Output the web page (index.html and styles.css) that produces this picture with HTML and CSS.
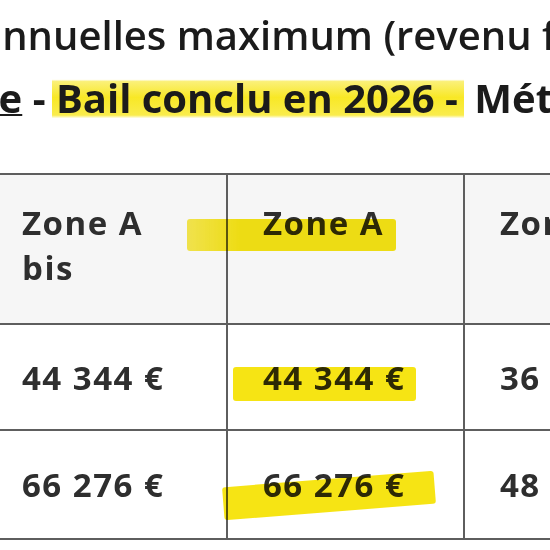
FILE: index.html
```html
<html>
<head>
    <meta charset="UTF-8">
    <meta name="viewport" content="width=device-width, initial-scale=1.0">
    <title>Plafonds de ressources</title>
    <link rel="stylesheet" href="styles.css">
</head>
<body>

<div class="sheet">
    <div class="intro">
        <p class="lead">annuelles maximum (revenu fiscal de référence)</p>
        <p class="sub"><a href="#">intermédiaire</a> - <span class="hl">Bail conclu en 2026 -</span> Métropole</p>
    </div>

    <table class="plafonds">
        <colgroup>
            <col class="first">
            <col>
            <col>
        </colgroup>
        <thead>
        <tr>
            <th class="narrow">Zone A bis</th>
            <th>Zone A</th>
            <th>Zone B1</th>
        </tr>
        </thead>
        <tbody>
        <tr>
            <td>44 344 €</td>
            <td>44 344 €</td>
            <td>36 135 €</td>
        </tr>
        <tr>
            <td>66 276 €</td>
            <td>66 276 €</td>
            <td>48 255 €</td>
        </tr>
        </tbody>
    </table>

    <!-- marker strokes drawn over the scan -->
    <div class="mark mark-head"></div>
    <div class="mark mark-row1"></div>
    <div class="mark mark-row2"></div>
</div>

</body>
</html>
```

FILE: styles.css
```css
body {
    margin: 0;
    background-color: #fff;
    font-family: "Open Sans", Lato, sans-serif;
    color: #1b1b1b;
    overflow: hidden;
}

.sheet {
    position: relative;
    width: 550px;
    height: 550px;
    overflow: hidden;
}

.intro p {
    margin: 0;
    white-space: nowrap;
}

.lead {
    font-size: 40px;
    font-weight: 600;
    line-height: 69px;
    margin-left: -21px !important;
}

.sub {
    font-size: 40px;
    font-weight: 700;
    line-height: 57px;
    margin-left: -254px !important;
}

.sub a {
    color: #1b1b1b;
    text-decoration: underline;
    text-decoration-thickness: 2px;
}

.hl {
    background: linear-gradient(to bottom, transparent 17%, rgba(247, 230, 30, 0.6) 21%, rgba(247, 228, 0, 0.85) 50%, rgba(247, 228, 0, 0.7) 82%, transparent 88%);
    padding: 0 6px 0 4px;
    margin-left: -4px;
}

.plafonds {
    border-collapse: collapse;
    margin-top: 47px;
    margin-left: -15px;
    table-layout: fixed;
    width: 715px;
}

.plafonds col {
    width: 237px;
}

.plafonds col.first {
    width: 241px;
}

.plafonds th,
.plafonds td {
    border: 2px solid #5e5e5e;
    padding: 0 20px 0 35px;
    text-align: left;
    font-size: 33px;
    font-weight: 700;
    letter-spacing: 1.5px;
    color: #2e2e2e;
}

.plafonds th {
    background-color: #f6f6f6;
    height: 150px;
    line-height: 45px;
    vertical-align: top;
    padding-top: 25px;
    box-sizing: border-box;
}

.plafonds th.narrow {
    padding-right: 60px;
}

.plafonds td {
    height: 106px;
    vertical-align: middle;
}

.plafonds tbody tr:last-child td {
    height: 109px;
}

.mark {
    position: absolute;
    background-color: #f6e200;
    mix-blend-mode: multiply;
    opacity: 0.92;
    border-radius: 3px;
}

.mark-head {
    left: 187px;
    top: 219px;
    width: 209px;
    height: 32px;
    background: linear-gradient(to right, rgba(246, 226, 0, 0.75), #f6e200 25%);
}

.mark-row1 {
    left: 233px;
    top: 367px;
    width: 183px;
    height: 34px;
}

.mark-row2 {
    left: 223px;
    top: 479px;
    width: 212px;
    height: 33px;
    transform: rotate(-4.5deg);
}
```
